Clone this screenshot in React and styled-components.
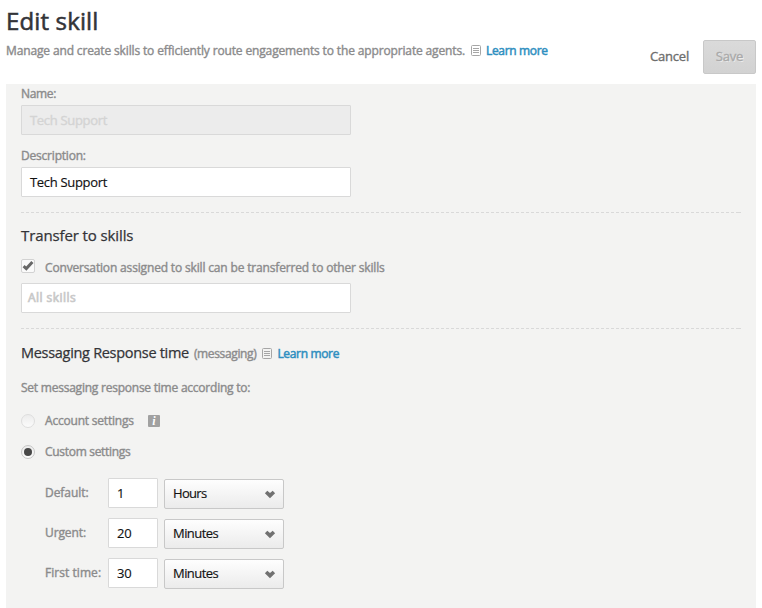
import React from 'react';
import styled, { createGlobalStyle } from 'styled-components';

const GlobalStyle = createGlobalStyle`
  * { box-sizing: border-box; }
  body {
    margin: 0;
    background: #fff;
    font-family: "Trebuchet MS", "Open Sans", sans-serif;
    font-size: 12px;
    font-variant-ligatures: none;
    overflow: hidden;
  }
`;

const Page = styled.div`
  width: 762px;
  height: 608px;
  padding: 0 6px;
  display: flex;
  flex-direction: column;
`;

const Header = styled.header`
  display: flex;
  justify-content: space-between;
  height: 84px;
  flex: none;
`;

const Title = styled.h1`
  margin: 4px 0 0;
  font-size: 24px;
  line-height: 33px;
  height: 38px;
  font-weight: 400;
  color: #333438;
  letter-spacing: 0.14px;
  -webkit-text-stroke: 0.55px;
`;

const Line = styled.div`
  display: flex;
  align-items: center;
  height: 18px;
`;

const Text = styled.span`
  font-size: ${(p) => p.$size || 12}px;
  line-height: 18px;
  color: ${(p) => p.$color || '#8b8b8c'};
  letter-spacing: ${(p) => p.$track || 0}px;
  -webkit-text-stroke: ${(p) => (p.$stroke === undefined ? 0.4 : p.$stroke)}px;
  white-space: nowrap;
`;

const HelpGroup = styled.span`
  display: flex;
  align-items: center;
  margin: 2px 0 0 5px;
`;

const Link = styled.a`
  color: #2f8fc0;
  line-height: 18px;
  letter-spacing: -0.34px;
  -webkit-text-stroke: 0.5px;
  white-space: nowrap;
`;

const DocSvg = styled.svg`
  flex: none;
  margin: 0 5px 0 6px;
`;

const Actions = styled.div`
  display: flex;
  align-items: center;
  gap: 14px;
  height: 34px;
  margin-top: 40px;
`;

const CancelButton = styled.button`
  font: inherit;
  font-size: 13px;
  line-height: 18px;
  padding: 0 0 2px;
  border: 0;
  background: none;
  color: #6d6d6d;
  letter-spacing: -0.2px;
  -webkit-text-stroke: 0.35px;
`;

const SaveButton = styled.button`
  font: inherit;
  font-size: 13px;
  line-height: 18px;
  width: 53px;
  height: 34px;
  padding: 0 0 2px;
  border: 1px solid #c8c8c8;
  border-radius: 2px;
  background: linear-gradient(#dadada, #d2d2d2);
  color: #a9a9a9;
  text-shadow: 1px 1px 0 #ececec;
  letter-spacing: -0.2px;
  -webkit-text-stroke: 0.35px;
`;

const Panel = styled.main`
  flex: 1;
  background: #f3f3f2;
  padding: 0 15px;
`;

const FieldGroup = styled.div`
  display: flex;
  flex-direction: column;
  padding-top: ${(p) => p.$top}px;
  gap: 2px;
`;

const Field = styled.div`
  display: flex;
  align-items: center;
  width: ${(p) => p.$width || 330}px;
  height: 30px;
  padding: 0 ${(p) => p.$pad || 8}px 0;
  border: 1px solid #d9d9d9;
  border-radius: 1px;
  background: ${(p) => (p.$disabled ? '#ececec' : '#fff')};
`;

const Section = styled.section`
  height: ${(p) => p.$height}px;
  padding-top: ${(p) => p.$top}px;
`;

const Dashes = styled.div`
  height: 1px;
  width: 720px;
  margin-top: 15px;
  background: repeating-linear-gradient(90deg, #d9d9d9 0 3px, transparent 3px 5px);
  border-right: 2px solid #d9d9d9;
`;

const OptionRow = styled.div`
  display: flex;
  align-items: center;
  height: 18px;
  gap: 10px;
  margin-top: ${(p) => p.$gap}px;
`;

const Checkbox = styled.span`
  display: flex;
  align-items: center;
  justify-content: center;
  width: 14px;
  height: 14px;
  margin-bottom: 4px;
  border: 1px solid #d2d2d2;
  border-radius: 2px;
  background: #fafafa;
`;

const Radio = styled.span`
  display: flex;
  align-items: center;
  justify-content: center;
  width: 14px;
  height: 14px;
  border: 1px solid ${(p) => (p.$on ? '#c6c6c6' : '#dedede')};
  border-radius: 50%;
  background: linear-gradient(#ececec, #fbfbfb);
`;

const RadioDot = styled.span`
  width: 8px;
  height: 8px;
  border-radius: 50%;
  background: #474747;
`;

const InfoBadge = styled.span`
  display: flex;
  align-items: center;
  justify-content: center;
  width: 12px;
  height: 12px;
  margin-left: 4px;
  border-radius: 1px;
  background: #a1a1a1;
  color: #fff;
  font: italic bold 12px/12px "Liberation Serif", serif;
`;

const TimeGrid = styled.div`
  display: grid;
  grid-template-columns: 63px 50px 120px;
  grid-auto-rows: 31px;
  row-gap: 9px;
  column-gap: 0;
  margin: 17px 0 0 24px;
`;

const TimeLabel = styled(Text)`
  line-height: 30px;
`;

const Select = styled.div`
  display: flex;
  align-items: center;
  justify-content: space-between;
  width: 120px;
  height: 30px;
  margin: 1px 0 0 6px;
  padding: 0 7px 0 8px;
  border: 1px solid #c8c8c8;
  border-radius: 2px;
  background: linear-gradient(#fefefe, #ebebeb);
`;

const UnitText = styled(Text)`
  margin-bottom: 2px;
`;

const DocIcon = () => (
  <DocSvg width="10" height="12" viewBox="0 0 10 12" fill="none" stroke="#a6a6a6">
    <rect x="0.5" y="0.5" width="9" height="10" rx="1" />
    <path d="M2 3.5h6M2 5.5h6M2 7.5h6" />
  </DocSvg>
);

const CheckIcon = () => (
  <svg width="12" height="12" viewBox="0 0 12 12" fill="none" stroke="#686868" strokeWidth="3">
    <path d="M1.6 6.2 4.3 8.6 10.4 2" />
  </svg>
);

const ChevronIcon = () => (
  <svg width="12" height="9" viewBox="0 0 12 9" fill="#717171">
    <path d="M0.9 3.2 3.3 0.8 6 3.1 8.7 0.8 11.1 3.2 6 8.3Z" />
  </svg>
);

const times = [
  { label: 'Default:', track: -0.05, value: '1', unit: 'Hours', unitTrack: -0.7 },
  { label: 'Urgent:', track: -0.1, value: '20', unit: 'Minutes', unitTrack: -0.55 },
  { label: 'First time:', track: 0.05, value: '30', unit: 'Minutes', unitTrack: -0.55 },
];

export default function App() {
  return (
    <>
      <GlobalStyle />
      <Page>
        <Header>
          <div>
            <Title>Edit skill</Title>
            <Line>
              <Text $track={-0.14}>
                Manage and create skills to efficiently route engagements to the appropriate agents.
              </Text>
              <DocIcon />
              <Link>Learn more</Link>
            </Line>
          </div>
          <Actions>
            <CancelButton>Cancel</CancelButton>
            <SaveButton>Save</SaveButton>
          </Actions>
        </Header>
        <Panel>
          <FieldGroup $top={1}>
            <Text $track={-0.35}>Name:</Text>
            <Field $disabled>
              <Text $size={13} $track={-0.32} $color="#d4d4d4">Tech Support</Text>
            </Field>
          </FieldGroup>
          <FieldGroup $top={12}>
            <Text $track={-0.2}>Description:</Text>
            <Field>
              <Text $size={13} $track={-0.32} $color="#111" $stroke={0.15}>Tech Support</Text>
            </Field>
          </FieldGroup>
          <Dashes />
          <Section $height={100} $top={13}>
            <Line>
              <Text $size={15} $track={-0.11} $color="#333438" $stroke={0.25}>Transfer to skills</Text>
            </Line>
            <OptionRow $gap={15}>
              <Checkbox><CheckIcon /></Checkbox>
              <Text $track={-0.16}>Conversation assigned to skill can be transferred to other skills</Text>
            </OptionRow>
            <FieldGroup $top={6}>
              <Field $pad={6}>
                <Text $track={0.45} $color="#c9c9c9" $stroke={0.7}>All skills</Text>
              </Field>
            </FieldGroup>
          </Section>
          <Dashes />
          <Section $height={279} $top={15}>
            <Line>
              <Text $size={14.5} $track={-0.3} $color="#333438" $stroke={0.25}>Messaging Response time</Text>
              <HelpGroup>
                <Text $track={-0.36}>(messaging)</Text>
                <DocIcon />
                <Link>Learn more</Link>
              </HelpGroup>
            </Line>
            <OptionRow $gap={17}>
              <Text $track={-0.23}>Set messaging response time according to:</Text>
            </OptionRow>
            <OptionRow $gap={15}>
              <Radio />
              <Text $track={-0.2}>Account settings</Text>
              <InfoBadge>i</InfoBadge>
            </OptionRow>
            <OptionRow $gap={13}>
              <Radio $on><RadioDot /></Radio>
              <Text $track={-0.3}>Custom settings</Text>
            </OptionRow>
            <TimeGrid>
              {times.map((t) => (
                <React.Fragment key={t.label}>
                  <TimeLabel $track={t.track}>{t.label}</TimeLabel>
                  <Field $width={50}>
                    <Text $size={13} $track={-0.3} $color="#111" $stroke={0.15}>{t.value}</Text>
                  </Field>
                  <Select>
                    <UnitText $size={13} $track={t.unitTrack} $color="#111" $stroke={0.15}>{t.unit}</UnitText>
                    <ChevronIcon />
                  </Select>
                </React.Fragment>
              ))}
            </TimeGrid>
          </Section>
        </Panel>
      </Page>
    </>
  );
}
